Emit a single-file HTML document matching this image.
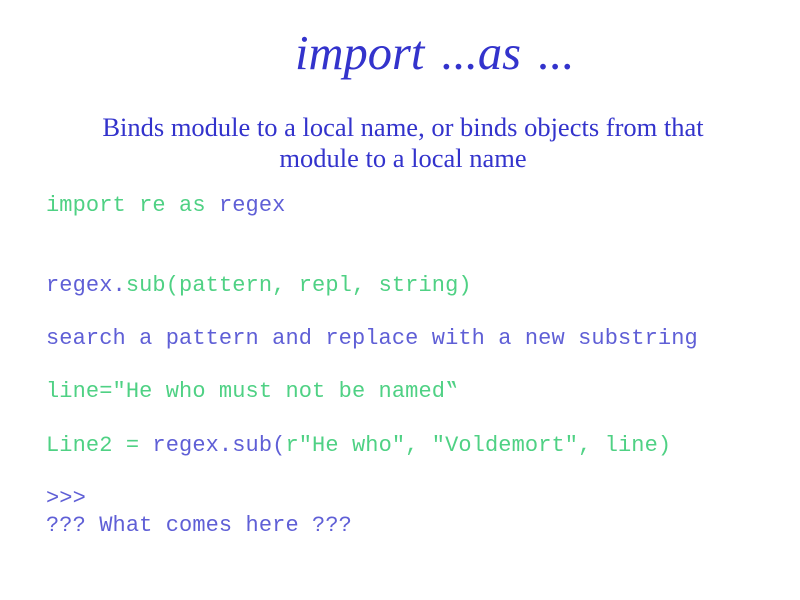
<!DOCTYPE html>
<html><head><style>
body{margin:0;width:800px;height:600px;background:#fff;position:relative;overflow:hidden}
.t{position:absolute;left:295px;top:26px;font:italic 48.5px "Liberation Serif",serif;color:#3333cc;white-space:nowrap;word-spacing:5px}
.s{position:absolute;left:0;width:806px;top:112px;text-align:center;font:26.5px/31px "Liberation Serif",serif;color:#3333cc}
.c{position:absolute;left:46px;font:22px "Liberation Mono",monospace;white-space:pre;letter-spacing:0.1px}
.g{color:#4fd184}.b{color:#5f5fd6}
</style></head><body>
<div class="t">import ...as ...</div>
<div class="s">Binds module to a local name, or binds objects from that<br>module to a local name</div>
<div class="c" style="top:193px"><span class="g">import re as </span><span class="b">regex</span></div>
<div class="c" style="top:273px"><span class="b">regex.</span><span class="g">sub(pattern, repl, string)</span></div>
<div class="c b" style="top:326px">search a pattern and replace with a new substring</div>
<div class="c g" style="top:379px">line="He who must not be named‟</div>
<div class="c" style="top:433px"><span class="g">Line2 = </span><span class="b">regex.sub(</span><span class="g">r"He who", "Voldemort", line)</span></div>
<div class="c b" style="top:486px">&gt;&gt;&gt;</div>
<div class="c b" style="top:513px">??? What comes here ???</div>
</body></html>
